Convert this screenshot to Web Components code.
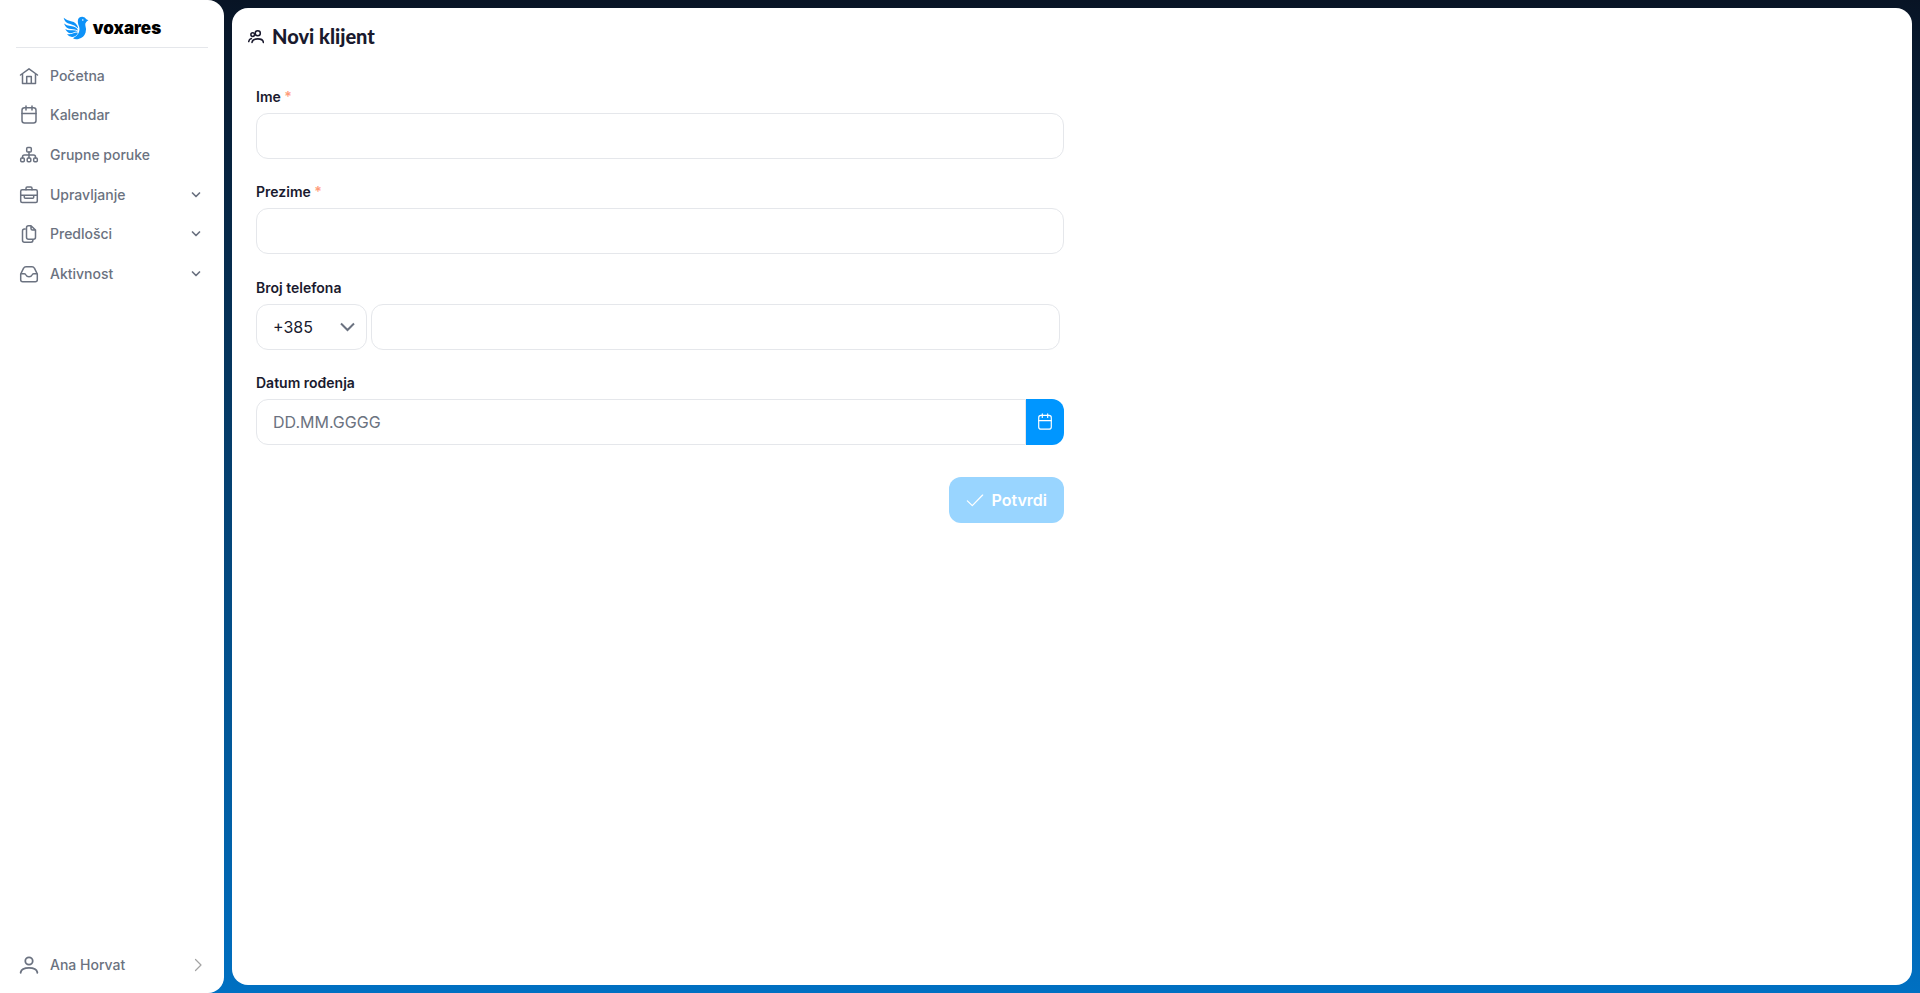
<!DOCTYPE html>
<html lang="hr">
<head>
<meta charset="utf-8">
<meta name="viewport" content="width=device-width, initial-scale=1">
<title>Novi klijent</title>
<style>
	body {
		margin: 0;
		font-family: Inter, "Liberation Sans", sans-serif;
		font-size: 14px;
		color: #1a1a2e;
	}
</style>
</head>
<body>
<app-shell>
	<side-bar slot="sidebar">
		<nav-item icon="home">Početna</nav-item>
		<nav-item icon="calendar">Kalendar</nav-item>
		<nav-item icon="sitemap">Grupne poruke</nav-item>
		<nav-item icon="briefcase" expandable>Upravljanje</nav-item>
		<nav-item icon="files" expandable>Predlošci</nav-item>
		<nav-item icon="inbox" expandable>Aktivnost</nav-item>
		<user-link slot="footer">Ana Horvat</user-link>
	</side-bar>
	<page-header icon="users">Novi klijent</page-header>
	<client-form>
		<text-field required>Ime</text-field>
		<text-field required>Prezime</text-field>
		<phone-field>Broj telefona</phone-field>
		<date-field placeholder="DD.MM.GGGG">Datum rođenja</date-field>
		<submit-button slot="actions" disabled>Potvrdi</submit-button>
	</client-form>
</app-shell>

<script>
const icons = {
	home: '<path d="M1.5 9 10 2.8 18.5 9M3.5 7.8V17.5H16.5V7.8M7.7 17.5V10.5H12.3V17.5"/>',
	calendar: '<rect x="3" y="2.7" width="14" height="15.3" rx="2.5"/><path d="M3 8.5H17M7 1V5M13 1V5"/>',
	sitemap: '<rect x="7.7" y="2.5" width="4.6" height="4.6" rx="1"/><path d="M10 7.1V13M3.5 13V12Q3.5 10 5.5 10H14.5Q16.5 10 16.5 12V13"/><rect x="1.7" y="13" width="3.6" height="3.8" rx="1"/><rect x="8.2" y="13" width="3.6" height="3.8" rx="1"/><rect x="14.7" y="13" width="3.6" height="3.8" rx="1"/>',
	briefcase: '<rect x="1.7" y="4.7" width="16.6" height="12.8" rx="1.5"/><path d="M7 4.7V3.2Q7 2 8.2 2H11.8Q13 2 13 3.2V4.7M1.7 10.3H18.3M5.3 10.3V12.3Q5.3 13.3 6.3 13.3H13.7Q14.7 13.3 14.7 12.3V10.3"/>',
	files: '<path d="M6 5H5.5Q3.5 5 3.5 7V16.3Q3.5 18.3 5.5 18.3H12Q14 18.3 14 15.5M12 1.7H9.5Q7.5 1.7 7.5 3.7V13.3Q7.5 15.3 9.5 15.3H14.5Q16.5 15.3 16.5 13.3V6ZM12 1.7V4.5Q12 6 13.5 6H16.5"/>',
	inbox: '<path d="M1.7 10 4.6 4.2Q5.3 2.7 7 2.7H13Q14.7 2.7 15.4 4.2L18.3 10V15.8Q18.3 17.8 16.3 17.8H3.7Q1.7 17.8 1.7 15.8ZM1.7 9.7H5.3Q6.5 9.7 7 11 7.8 12.8 10 12.8T13 11Q13.5 9.7 14.7 9.7H18.3"/>',
	user: '<circle cx="10" cy="6" r="3.7"/><path d="M1.7 17.8V17.2Q2.7 12.9 10 12.9T18.3 17.2V17.8"/>',
	users: '<circle cx="12.2" cy="6.6" r="3.2"/><circle cx="5.9" cy="8.2" r="2.3"/><path d="M5 18Q5.5 13.6 12.2 13.6T19.2 18M.9 17Q1.2 13.9 4.2 13.2"/>',
	down: '<path d="M6.5 8 10 11.5 13.5 8"/>',
	right: '<path d="M7.5 4.5 13 10 7.5 15.5"/>',
	check: '<path d="M1.5 11 7 16.3 18.5 4.5"/>'
};

class AppIcon extends HTMLElement {
	constructor() {
		super();
		this.attachShadow({mode: 'open'});
	}

	connectedCallback() {
		this.shadowRoot.innerHTML = `
			<style>
				:host {
					display: block;
					flex: none;
					width: var(--icon-size, 20px);
					height: var(--icon-size, 20px);
				}

				svg {
					display: block;
					width: 100%;
					height: 100%;
					fill: none;
					stroke: currentColor;
					stroke-width: var(--icon-stroke, 1.5);
					stroke-linecap: round;
					stroke-linejoin: round;
				}
			</style>
			<svg viewBox="0 0 20 20" aria-hidden="true">${icons[this.getAttribute('name')]}</svg>
		`;
	}
}

class AppShell extends HTMLElement {
	constructor() {
		super();
		this.attachShadow({mode: 'open'}).innerHTML = `
			<style>
				:host {
					display: grid;
					grid-template-columns: 224px 1fr;
					min-height: 100vh;
					background: linear-gradient(#081425, #0070c2);
				}

				main {
					margin: 8px;
					padding: 16px 24px 24px;
					border-radius: 16px;
					background: #fff;
				}
			</style>
			<slot name="sidebar"></slot>
			<main><slot></slot></main>
		`;
	}
}

class SideBar extends HTMLElement {
	constructor() {
		super();
		this.attachShadow({mode: 'open'}).innerHTML = `
			<style>
				:host {
					display: flex;
					flex-direction: column;
					box-sizing: border-box;
					padding: 8px 16px;
					border-radius: 0 16px 16px 0;
					background: #fff;
				}

				header {
					display: flex;
					justify-content: center;
					padding: 4px 0 3px;
					border-bottom: 1px solid #e5e7eb;
				}

				/* six rows share the height evenly */
				nav {
					display: grid;
					grid-auto-rows: 1fr;
					min-height: 238px;
					margin-top: 8px;
				}

				footer {
					margin-top: auto;
				}
			</style>
			<header><brand-logo></brand-logo></header>
			<nav><slot></slot></nav>
			<footer><slot name="footer"></slot></footer>
		`;
	}
}

class BrandLogo extends HTMLElement {
	constructor() {
		super();
		this.attachShadow({mode: 'open'}).innerHTML = `
			<style>
				:host {
					display: block;
				}

				a {
					display: flex;
					align-items: center;
					gap: 4px;
					height: 32px;
					color: #000;
					font-size: 17px;
					font-weight: 900;
					line-height: 24px;
					text-decoration: none;
				}

				svg {
					width: 26px;
					height: 24px;
				}
			</style>
			<a href="#">
				<svg viewBox="0 0 26 24" aria-hidden="true">
					<g fill="#0d92f8">
						<path d="M25.4 4.3 23.3 3.2Q22.2.8 19.3.7 15.8.7 14.9 4 14.5 6 15.3 8.600 17.600 13.500 15.500 17.300 13.800 20.300 10 22.300 12.300 23.700 15.500 23 21 21.500 22.600 16.500 23.600 13 22.400 9.800 21.700 7.600 23.200 6 24 5 25.4 4.3Z"/>
						<path d="M.6 1.800Q3.500 4.400 8 5.200 14.300 6.300 15.200 12.600 11.500 8.900 7.200 8.100 1.800 7.100.6 1.800Z"/>
						<path d="M1 7.400Q3.500 9.600 7.700 10 13 10.400 15.200 14.400 11.800 12.900 8.500 12.900 3 12.900 1 7.400Z"/>
						<path d="M2.200 13Q4.800 14.500 8 14.200 12.500 13.800 15 15.600 12.200 15.500 9.800 16.700 5 18.500 2.200 13Z"/>
						<path d="M4 17.900Q7 18.900 9.700 17.500 12.600 16.100 15 16.700 13.300 20.400 9.500 20.900 6 21.200 4 17.900Z"/>
					</g>
					<circle cx="19.800" cy="4" r=".8" fill="#fff"/>
				</svg>
				<span>voxares</span>
			</a>
		`;
	}
}

class NavItem extends HTMLElement {
	constructor() {
		super();
		this.attachShadow({mode: 'open'});
	}

	connectedCallback() {
		const expandable = this.hasAttribute('expandable');
		const tag = expandable ? 'button' : 'a';
		const attrs = expandable ? 'type="button" aria-expanded="false"' : 'href="#"';

		this.shadowRoot.innerHTML = `
			<style>
				:host {
					display: grid;
				}

				a, button {
					display: flex;
					align-items: center;
					gap: 11px;
					width: 100%;
					padding: 0 2px 0 3px;
					border: 0;
					background: none;
					color: #6b7280;
					font: 500 14px/20px Inter, sans-serif;
					text-align: left;
					text-decoration: none;
					cursor: pointer;
				}

				.label {
					flex: 1;
				}

				.chevron {
					--icon-stroke: 1.7;
				}
			</style>
			<${tag} ${attrs}>
				<app-icon name="${this.getAttribute('icon')}"></app-icon>
				<span class="label"><slot></slot></span>
				${expandable ? '<app-icon class="chevron" name="down"></app-icon>' : ''}
			</${tag}>
		`;
	}
}

class UserLink extends HTMLElement {
	constructor() {
		super();
		this.attachShadow({mode: 'open'}).innerHTML = `
			<style>
				:host {
					display: block;
				}

				a {
					display: flex;
					align-items: center;
					gap: 11px;
					padding: 10px 0 10px 3px;
					color: #6b7280;
					font-weight: 500;
					line-height: 20px;
					text-decoration: none;
				}

				span {
					flex: 1;
				}

				.avatar {
					--icon-stroke: 1.8;
				}

				.more {
					--icon-stroke: 1.2;
					color: #a3a3a3;
				}
			</style>
			<a href="#">
				<app-icon class="avatar" name="user"></app-icon>
				<span><slot></slot></span>
				<app-icon class="more" name="right"></app-icon>
			</a>
		`;
	}
}

class PageHeader extends HTMLElement {
	constructor() {
		super();
		this.attachShadow({mode: 'open'});
	}

	connectedCallback() {
		this.shadowRoot.innerHTML = `
			<style>
				:host {
					display: flex;
					align-items: center;
					gap: 8px;
					margin: 0 -8px 39px;
					--icon-size: 16px;
					--icon-stroke: 1.9;
				}

				h1 {
					margin: 0;
					font: 900 20px/24px Lato, sans-serif;
				}
			</style>
			<app-icon name="${this.getAttribute('icon')}"></app-icon>
			<h1><slot></slot></h1>
		`;
	}
}

class ClientForm extends HTMLElement {
	constructor() {
		super();
		this.attachShadow({mode: 'open'}).innerHTML = `
			<style>
				:host {
					display: block;
					box-sizing: border-box;
					width: 50%;
					padding-right: 8px;
				}

				.fields {
					display: grid;
					grid-auto-rows: 1fr;
					min-height: 381px;
				}

				.actions {
					display: flex;
					justify-content: flex-end;
					margin-top: 9px;
				}
			</style>
			<form>
				<div class="fields"><slot></slot></div>
				<div class="actions"><slot name="actions"></slot></div>
			</form>
		`;
	}
}

// shared look of the three field types
const fieldStyles = `
	:host {
		display: block;
	}

	label {
		display: block;
		margin-bottom: 6px;
		font-size: 14px;
		font-weight: 600;
		line-height: 20px;
	}

	input, select {
		box-sizing: border-box;
		width: 100%;
		height: 46px;
		padding: 0 16px;
		border: 1px solid #e5e7eb;
		border-radius: 12px;
		background: #fff;
		color: #1a1a2e;
		font: 16px/24px Inter, sans-serif;
		outline: none;
	}

	input:focus, select:focus {
		border-color: #0096ff;
	}

	input::placeholder {
		color: #6b7280;
		opacity: 1;
	}
`;

class TextField extends HTMLElement {
	constructor() {
		super();
		this.attachShadow({mode: 'open'});
	}

	connectedCallback() {
		const required = this.hasAttribute('required');

		this.shadowRoot.innerHTML = `
			<style>
				${fieldStyles}

				.star {
					color: #ff9b7a;
				}
			</style>
			<label for="field"><slot></slot>${required ? ' <span class="star">*</span>' : ''}</label>
			<input id="field" type="text" ${required ? 'required' : ''}>
		`;
	}
}

class PhoneField extends HTMLElement {
	constructor() {
		super();
		this.attachShadow({mode: 'open'}).innerHTML = `
			<style>
				${fieldStyles}

				.row {
					display: grid;
					grid-template-columns: 111px 1fr;
					gap: 4px;
					padding-right: 4px;
				}

				.code {
					display: grid;
					align-items: center;
				}

				.code > * {
					grid-area: 1 / 1;
				}

				select {
					appearance: none;
				}

				svg {
					justify-self: end;
					width: 16px;
					height: 10px;
					margin-right: 11px;
					fill: none;
					stroke: #6b7280;
					stroke-width: 2;
					pointer-events: none;
				}
			</style>
			<label for="number"><slot></slot></label>
			<div class="row">
				<div class="code">
					<select aria-label="Pozivni broj">
						<option>+385</option>
					</select>
					<svg viewBox="0 0 16 10" aria-hidden="true"><path d="M1 1.500 7.500 8 14 1.500"/></svg>
				</div>
				<input id="number" type="tel">
			</div>
		`;
	}
}

class DateField extends HTMLElement {
	constructor() {
		super();
		this.attachShadow({mode: 'open'});
	}

	connectedCallback() {
		this.shadowRoot.innerHTML = `
			<style>
				${fieldStyles}

				.group {
					display: flex;
				}

				input {
					flex: 1;
					border-radius: 12px 0 0 12px;
				}

				button {
					display: grid;
					place-items: center;
					width: 38px;
					padding: 0;
					border: 0;
					border-radius: 0 12px 12px 0;
					background: #0096ff;
					color: #fff;
					cursor: pointer;
					--icon-size: 18px;
					--icon-stroke: 1.3;
				}
			</style>
			<label for="date"><slot></slot></label>
			<div class="group">
				<input id="date" type="text" placeholder="${this.getAttribute('placeholder') || ''}">
				<button type="button" aria-label="Odaberi datum"><app-icon name="calendar"></app-icon></button>
			</div>
		`;
	}
}

class SubmitButton extends HTMLElement {
	constructor() {
		super();
		this.attachShadow({mode: 'open'});
	}

	connectedCallback() {
		this.shadowRoot.innerHTML = `
			<style>
				:host {
					display: block;
				}

				button {
					display: flex;
					align-items: center;
					gap: 8px;
					height: 46px;
					padding: 0 17px;
					border: 0;
					border-radius: 12px;
					background: #0096ff;
					color: #fff;
					font: 600 16px/24px Inter, sans-serif;
					--icon-size: 18px;
					--icon-stroke: 1.4;
				}

				button:disabled {
					background: #99d5ff;
				}
			</style>
			<button type="submit" ${this.hasAttribute('disabled') ? 'disabled' : ''}>
				<app-icon name="check"></app-icon>
				<span><slot></slot></span>
			</button>
		`;
	}
}

window.customElements.define('app-icon', AppIcon);
window.customElements.define('app-shell', AppShell);
window.customElements.define('side-bar', SideBar);
window.customElements.define('brand-logo', BrandLogo);
window.customElements.define('nav-item', NavItem);
window.customElements.define('user-link', UserLink);
window.customElements.define('page-header', PageHeader);
window.customElements.define('client-form', ClientForm);
window.customElements.define('text-field', TextField);
window.customElements.define('phone-field', PhoneField);
window.customElements.define('date-field', DateField);
window.customElements.define('submit-button', SubmitButton);
</script>
</body>
</html>
